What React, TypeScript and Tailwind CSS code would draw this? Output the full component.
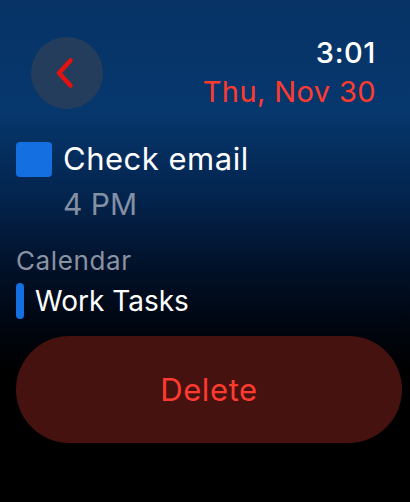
import React from "react";

export default function App() {
  return (
    <div
      className="w-[410px] h-[502px] overflow-hidden flex flex-col bg-[linear-gradient(180deg,#073366_0%,#06376d_22%,#03234c_40%,#011027_54%,#00050e_66%,#000000_74%)]"
      style={{ fontFamily: "Inter, 'Noto Sans', sans-serif" }}
    >
      <div className="flex justify-between items-start pl-[31px] pr-[34px] pt-[35px]">
        <div className="mt-[2px] w-[72px] h-[72px] rounded-full bg-[#253d5c] flex items-center justify-center">
          <svg width="24" height="34" viewBox="0 0 24 34" fill="none">
            <path d="M15.5 4.5 L4 17 L15.5 29.5" stroke="#e3110f" strokeWidth="4.5" strokeLinecap="round" strokeLinejoin="round" />
          </svg>
        </div>
        <div className="flex flex-col items-end">
          <div className="text-[29px] leading-[36px] font-medium text-white tracking-[0.6px]">3:01</div>
          <div className="text-[29px] leading-[34px] text-[#ff3b30] mt-[4px] tracking-[0.4px]">Thu, Nov 30</div>
        </div>
      </div>

      <div className="flex items-center gap-[11px] pl-4 mt-[31px]">
        <div className="w-[36px] h-[35px] rounded-[4px] bg-[#1470e0]" />
        <div className="text-[31px] leading-[38px] text-white tracking-[0.5px]">Check email</div>
      </div>
      <div className="pl-[63px] text-[30px] leading-[36px] text-[#8590a4] mt-[8px]">4 PM</div>

      <div className="pl-4 mt-[23px] text-[26px] leading-[32px] text-[#8a93a3] tracking-[0.6px]">Calendar</div>
      <div className="flex items-center gap-[11px] pl-4 mt-[6px]">
        <div className="w-[8px] h-[36px] rounded-full bg-[#1470e0]" />
        <div className="text-[28px] leading-[36px] text-white">Work Tasks</div>
      </div>

      <div className="mx-4 w-[386px] mt-[17px] h-[107px] rounded-full bg-[#46120f] flex items-center justify-center">
        <span className="text-[31px] leading-[38px] text-[#ff3b30] tracking-[0.6px]">Delete</span>
      </div>
    </div>
  );
}
